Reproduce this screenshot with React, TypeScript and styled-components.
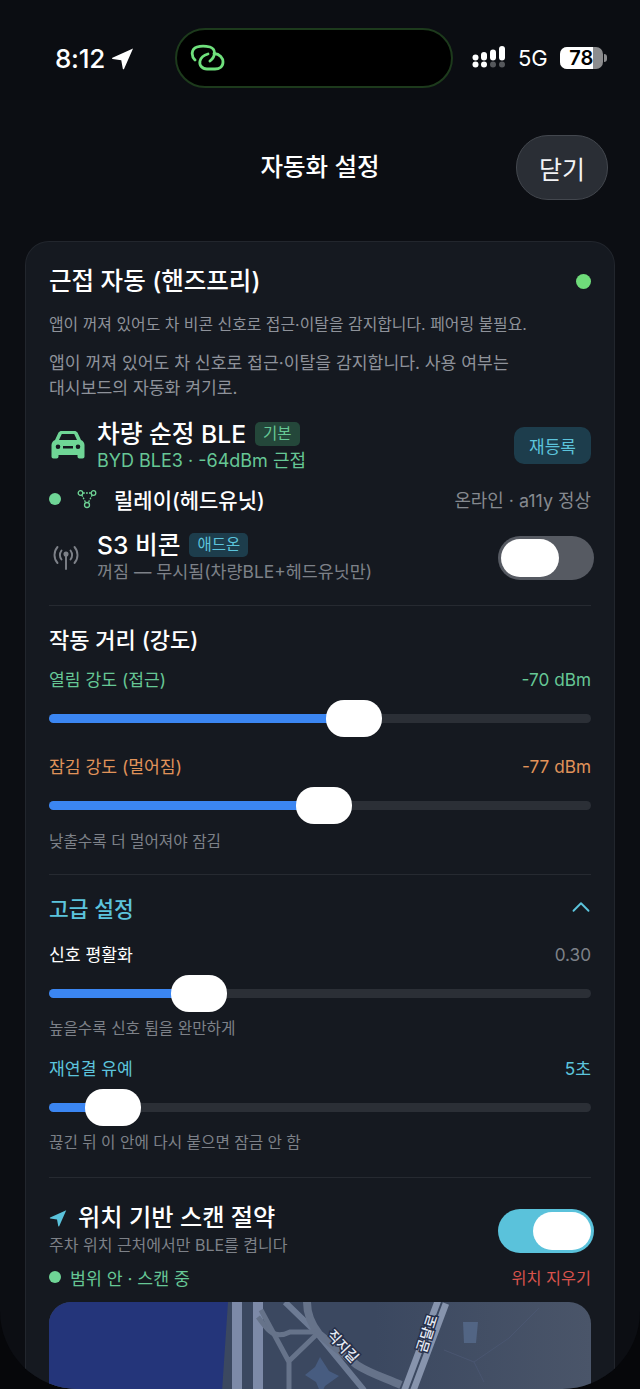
import React from "react";
import styled, { createGlobalStyle } from "styled-components";
import { ChevronUp } from "lucide-react";

const FONT = `"Inter", "Noto Sans CJK KR", sans-serif`;

const Global = createGlobalStyle`
  html, body {
    margin: 0;
    padding: 0;
    background: #050608;
    font-family: ${FONT};
    color: #fff;
  }
  * { box-sizing: border-box; }
`;

const Screen = styled.div`
  position: relative;
  width: 640px;
  height: 1389px;
  overflow: hidden;
  background: #06070a;
`;
const StatusBar = styled.div`
  height: 100px;
  padding: 28px 0 0 55px;
  display: flex;
  align-items: flex-start;
  background: #0b0d12;
`;
const Time = styled.div`
  display: flex;
  align-items: center;
  gap: 6px;
  height: 60px;
  width: 120px;
  flex: none;
  font-size: 26px;
  font-weight: 500;
  font-family: "Inter", sans-serif;
  letter-spacing: -0.3px;
`;
const Island = styled.div`
  width: 278px;
  height: 60px;
  flex: none;
  background: #000;
  border: 2px solid #1d3a1c;
  border-radius: 30px;
  display: flex;
  align-items: center;
  padding-left: 13px;
`;
const StatusRight = styled.div`
  display: flex;
  align-items: center;
  height: 60px;
  margin-left: 19px;
`;
const NetLabel = styled.span`
  margin: 0 12px;
  font-size: 22px;
  font-family: "Inter", sans-serif;
`;
const Battery = styled.div`
  position: relative;
  width: 43px;
  height: 22px;
  border-radius: 7px;
  overflow: hidden;
  background: #8c8c8e;
`;
const BatteryFill = styled.div`
  height: 100%;
  background: #fff;
`;
const BatteryText = styled.span`
  position: absolute;
  inset: 0;
  display: flex;
  align-items: center;
  justify-content: center;
  color: #000;
  font-size: 20px;
  font-weight: 600;
  font-family: "Inter", sans-serif;
`;
const BatteryCap = styled.div`
  width: 3px;
  height: 8px;
  margin-left: 1px;
  border-radius: 0 3px 3px 0;
  background: #8c8c8e;
`;

const Sheet = styled.div`
  height: 1289px;
  overflow: hidden;
  background: #0c0e13;
  border-radius: 0 0 78px 78px;
  padding: 0 25px;
`;
const SheetHeader = styled.div`
  position: relative;
  height: 141px;
  display: flex;
  align-items: flex-start;
  justify-content: center;
`;
const SheetTitle = styled.h1`
  margin: 50px 0 0;
  font-size: 24.5px;
  line-height: 34px;
  font-weight: 500;
`;
const CloseButton = styled.button`
  position: absolute;
  right: 7px;
  top: 35px;
  width: 92px;
  height: 65px;
  border-radius: 32px;
  border: 1px solid #43474e;
  background: #2a2e35;
  color: #f2f3f5;
  font-family: ${FONT};
  font-size: 25px;
`;
const Card = styled.div`
  background: #151920;
  border: 1px solid #22262d;
  border-bottom: 0;
  border-radius: 24px 24px 0 0;
  padding: 21px 23px 0;
`;
const CardHead = styled.div`
  display: flex;
  align-items: center;
  justify-content: space-between;
`;
const CardTitle = styled.h2`
  margin: 0;
  font-size: 24.5px;
  line-height: 36px;
  font-weight: 500;
`;
const Dot = styled.span<{ $size?: number; $color?: string }>`
  display: inline-block;
  flex: none;
  width: ${p => p.$size ?? 14}px;
  height: ${p => p.$size ?? 14}px;
  border-radius: 50%;
  background: ${p => p.$color ?? "#6fdc7a"};
`;
const Note = styled.p<{ $top?: number; $size: number }>`
  margin: ${p => p.$top ?? 0}px 0 0;
  font-size: ${p => p.$size}px;
  line-height: 25px;
  color: #8e929a;
`;
const VehicleRow = styled.div`
  display: flex;
  align-items: center;
  margin-top: 18px;
`;
const LeadIcon = styled.div`
  width: 48px;
  flex: none;
  display: flex;
  align-items: center;
  padding-left: 2px;
`;
const RowBody = styled.div`
  flex: 1;
  min-width: 0;
`;
const RowTitleLine = styled.div`
  display: flex;
  align-items: center;
  gap: 9px;
`;
const RowTitle = styled.span`
  font-size: 24.7px;
  line-height: 32px;
  font-weight: 500;
`;
const Tag = styled.span<{ $tone: "green" | "blue" }>`
  font-size: 15.5px;
  line-height: 24px;
  height: 24px;
  padding: 0 8px;
  border-radius: 5px;
  color: ${p => (p.$tone === "green" ? "#66c795" : "#5cc4dc")};
  background: ${p => (p.$tone === "green" ? "#24473a" : "#1d3d4c")};
`;
const RowSub = styled.div<{ $color?: string; $size?: number }>`
  font-size: ${p => p.$size ?? 17.4}px;
  line-height: 22px;
  color: ${p => p.$color ?? "#7d8188"};
`;
const ReRegister = styled.button`
  width: 77px;
  height: 37px;
  border: 0;
  border-radius: 10px;
  background: #1d3d4c;
  color: #5cc4dc;
  font-family: ${FONT};
  font-size: 17px;
`;
const RelayRow = styled.div`
  display: flex;
  align-items: center;
  margin-top: 10px;
  height: 34px;
`;
const RelayIcon = styled.span`
  margin: 0 17px 0 16px;
  display: flex;
`;
const RelayName = styled.span`
  flex: 1;
  font-size: 21px;
  font-weight: 500;
`;
const RelayState = styled.span`
  font-size: 17.9px;
  color: #85898f;
`;
const BeaconRow = styled.div`
  display: flex;
  align-items: center;
  margin-top: 13px;
  padding-bottom: 22px;
  border-bottom: 1px solid #262a31;
`;
const Toggle = styled.div<{ $on?: boolean }>`
  flex: none;
  width: 96px;
  height: 44px;
  margin: 3px -3px 0 0;
  padding: 3px;
  border-radius: 22px;
  display: flex;
  justify-content: ${p => (p.$on ? "flex-end" : "flex-start")};
  background: ${p => (p.$on ? "#5ac2db" : "#565a62")};
`;
const Knob = styled.div`
  width: 58px;
  height: 38px;
  border-radius: 19px;
  background: #fff;
`;
const SectionTitle = styled.h3`
  margin: 18px 0 0;
  font-size: 22px;
  line-height: 32px;
  font-weight: 500;
`;
const SliderHead = styled.div<{ $color?: string; $top?: number }>`
  display: flex;
  justify-content: space-between;
  align-items: center;
  margin-top: ${p => p.$top ?? 0}px;
  font-size: 17.2px;
  line-height: 26px;
  color: ${p => p.$color ?? "#fff"};
`;
const SliderValue = styled.span<{ $color?: string }>`
  color: ${p => p.$color ?? "inherit"};
`;
const SliderBox = styled.div`
  position: relative;
  height: 37px;
  margin-top: 7px;
  display: flex;
  align-items: center;
`;
const Track = styled.div`
  width: 100%;
  height: 9px;
  border-radius: 5px;
  background: #2b2f36;
  overflow: hidden;
`;
const Fill = styled.div`
  height: 100%;
  background: #3b86f2;
`;
const Thumb = styled.div`
  position: absolute;
  top: 0;
  width: 56px;
  height: 37px;
  border-radius: 18px;
  background: #fff;
`;
const Hint = styled.div<{ $top: number }>`
  margin-top: ${p => p.$top}px;
  font-size: 15.7px;
  line-height: 24px;
  color: #7d8188;
`;
const Divider = styled.div<{ $top: number }>`
  margin-top: ${p => p.$top}px;
  height: 1px;
  background: #262a31;
`;
const AdvancedHead = styled.div`
  display: flex;
  align-items: center;
  justify-content: space-between;
  margin-top: 15px;
  height: 34px;
  color: #5cc4dc;
  font-size: 21.5px;
  font-weight: 500;
`;
const Chevron = styled(ChevronUp)`
  margin-right: -5px;
`;
const ScanRow = styled.div`
  display: flex;
  align-items: center;
  margin-top: 24px;
`;
const ScanTitle = styled.div`
  display: flex;
  align-items: center;
  gap: 11px;
  font-size: 24.2px;
  line-height: 32px;
  font-weight: 500;
`;
const ScanStatus = styled.div`
  display: flex;
  align-items: center;
  justify-content: space-between;
  margin-top: 8px;
  height: 26px;
  font-size: 17.3px;
`;
const InRange = styled.span`
  display: flex;
  align-items: center;
  gap: 9px;
  color: #66c795;
`;
const ClearLink = styled.span`
  font-size: 16.3px;
  color: #d9534c;
`;
const MapBox = styled.div`
  margin-top: 12px;
  height: 120px;
  border-radius: 22px 22px 0 0;
  overflow: hidden;
  background: linear-gradient(90deg, #3b4860 60%, #4a5569);
`;
const MapSvg = styled.svg`
  display: block;
`;

const LocationArrow = ({ size, color }: { size: number; color: string }) => (
  <svg width={size} height={size} viewBox="0 0 24 24">
    <path d="M23 1.500 1.500 11.200c-.6.3-.5 1.200.2 1.300l9 1.400 1.600 8.800c.1.7 1 .8 1.300.2L23 1.500Z" fill={color} />
  </svg>
);

const SignalDots = () => (
  <svg width="34" height="24" viewBox="0 0 34 24" fill="#fff">
    <circle cx="3.500" cy="18.500" r="3" />
    <circle cx="12" cy="18.500" r="3" />
    <circle cx="21" cy="18.500" r="3" fill="#55575b" />
    <circle cx="30" cy="18.500" r="3" fill="#55575b" />
    <rect x="0.500" y="8.500" width="6" height="6" rx="3" />
    <rect x="9" y="6" width="6" height="8.500" rx="3" />
    <rect x="18" y="3.500" width="6" height="11" rx="3" />
    <rect x="27" y="0" width="6" height="14.500" rx="3" />
  </svg>
);

const LinkLogo = () => (
  <svg width="35" height="28" viewBox="0 0 35 28" fill="none" stroke="#6fe07c" strokeWidth="2.800" strokeLinecap="round">
    <path d="M5 16C1 12 1 5 7 3C10 2 16 2 20 3C26 5 26 12 20 17" />
    <path d="M24 9.500C30 10 33 14 33 18C33 23 29 25 25 25H17C12 25 9 21 10 17C11 13 14 11 18 10" />
  </svg>
);

const CarIcon = () => (
  <svg width="34" height="28" viewBox="0 0 34 28" fill="#6fd596">
    <path fillRule="evenodd" d="M7.500 1.500C8.200.6 9.300 0 10.500 0h13c1.200 0 2.300.6 3 1.500L30 9c2 .8 3.500 2.800 3.500 5v11.500c0 1.200-.8 2-2 2h-3c-1.200 0-2-.8-2-2V24h-19v1.500c0 1.200-.8 2-2 2h-3c-1.200 0-2-.8-2-2V14c0-2.200 1.500-4.200 3.500-5l3.500-7.500ZM10.800 3 8 9h18l-2.800-6H10.800ZM7 13.500a2.300 2.300 0 1 0 0 4.600 2.300 2.300 0 0 0 0-4.600Zm20 0a2.300 2.300 0 1 0 0 4.600 2.300 2.300 0 0 0 0-4.600ZM12 15v2.500h10V15H12Z" />
  </svg>
);

const RelayGraph = () => (
  <svg width="20" height="20" viewBox="0 0 20 20" fill="none" stroke="#6fd596" strokeWidth="1.300">
    <circle cx="3.500" cy="4" r="2.300" />
    <circle cx="16.500" cy="4" r="2.300" />
    <circle cx="10" cy="16" r="2.500" />
    <path d="M6 4h8M4.800 6 8.800 13.800M15.200 6l-4 7.800" strokeDasharray="1.800 1.200" />
  </svg>
);

const BeaconIcon = () => (
  <svg width="30" height="28" viewBox="0 0 30 28" fill="none" stroke="#7d8188" strokeWidth="1.900" strokeLinecap="round">
    <path d="M6.500 5C2.500 9.500 2.500 16.500 6.500 21M23.500 5c4 4.500 4 11.500 0 16" />
    <path d="M10.500 8.500c-2 2.800-2 6.200 0 9M19.500 8.500c2 2.800 2 6.200 0 9" />
    <circle cx="15" cy="12" r="1.600" fill="#7d8188" />
    <path d="M15 13v14" />
  </svg>
);

const MapArt = () => (
  <MapSvg width="542" height="120" viewBox="0 0 542 120" fill="none">
    <path d="M0 0h179l-6 90v30H0Z" fill="#24357a" />
    <path d="M188 0v120M209 0v120" stroke="#7d8aa8" strokeWidth="10" />
    <path d="M236 0 268 31l46 56 20 33" stroke="#6d7b94" strokeWidth="6" />
    <path d="M258 0c0 12 4 22 12 32l38 31c12 8 28 13 44 20" stroke="#66738a" strokeWidth="8" />
    <path d="M209 15c8 10 14 24 32 15h28" stroke="#66738a" strokeWidth="5" />
    <path d="M268 32 239 60M212 8l28 52v60" stroke="#66738a" strokeWidth="5" />
    <path d="M393 0 348 120" stroke="#8794ad" strokeWidth="15" />
    <path d="M393 0 348 120" stroke="#3b4860" strokeWidth="2" />
    <path d="M256 73l10-8 5-10 9 14 10 5-14 10-4 8-5-12Z" fill="#475c80" />
    <path d="M414 20h15l-2 21h-12Z" fill="#526584" />
    <path d="M395 48l30 12 10 20M425 60l35-24 30-30" stroke="#4a5670" strokeWidth="1" />
    <g fontFamily={FONT} fontSize="14" fontWeight="500" fill="#e6ebf4" stroke="#26304a" strokeWidth="3" paintOrder="stroke">
      <text transform="translate(293 45) rotate(47)" textAnchor="middle" dominantBaseline="middle">직지길</text>
      <text transform="translate(379 32) rotate(-72)" textAnchor="middle" dominantBaseline="middle">곰달로</text>
    </g>
  </MapSvg>
);

const Slider = ({ pct, left }: { pct: number; left: number }) => (
  <SliderBox>
    <Track>
      <Fill style={{ width: `${pct}%` }} />
    </Track>
    <Thumb style={{ left }} />
  </SliderBox>
);

export default function App() {
  return (
    <Screen>
      <Global />
      <StatusBar>
        <Time>
          8:12
          <LocationArrow size={23} color="#fff" />
        </Time>
        <Island>
          <LinkLogo />
        </Island>
        <StatusRight>
          <SignalDots />
          <NetLabel>5G</NetLabel>
          <Battery>
            <BatteryFill style={{ width: "78%" }} />
            <BatteryText>78</BatteryText>
          </Battery>
          <BatteryCap />
        </StatusRight>
      </StatusBar>
      <Sheet>
        <SheetHeader>
          <SheetTitle>자동화 설정</SheetTitle>
          <CloseButton>닫기</CloseButton>
        </SheetHeader>
        <Card>
          <CardHead>
            <CardTitle>근접 자동 (핸즈프리)</CardTitle>
            <Dot $size={15} />
          </CardHead>
          <Note $top={13} $size={15.9}>앱이 꺼져 있어도 차 비콘 신호로 접근·이탈을 감지합니다. 페어링 불필요.</Note>
          <Note $top={13} $size={17.2}>
            앱이 꺼져 있어도 차 신호로 접근·이탈을 감지합니다. 사용 여부는
            <br />
            대시보드의 자동화 켜기로.
          </Note>
          <VehicleRow>
            <LeadIcon>
              <CarIcon />
            </LeadIcon>
            <RowBody>
              <RowTitleLine>
                <RowTitle>차량 순정 BLE</RowTitle>
                <Tag $tone="green">기본</Tag>
              </RowTitleLine>
              <RowSub $color="#66c795" $size={18}>BYD BLE3 · -64dBm 근접</RowSub>
            </RowBody>
            <ReRegister>재등록</ReRegister>
          </VehicleRow>
          <RelayRow>
            <Dot $size={12} $color="#6fd596" />
            <RelayIcon>
              <RelayGraph />
            </RelayIcon>
            <RelayName>릴레이(헤드유닛)</RelayName>
            <RelayState>온라인 · a11y 정상</RelayState>
          </RelayRow>
          <BeaconRow>
            <LeadIcon>
              <BeaconIcon />
            </LeadIcon>
            <RowBody>
              <RowTitleLine>
                <RowTitle>S3 비콘</RowTitle>
                <Tag $tone="blue">애드온</Tag>
              </RowTitleLine>
              <RowSub>꺼짐 — 무시됨(차량BLE+헤드유닛만)</RowSub>
            </RowBody>
            <Toggle>
              <Knob />
            </Toggle>
          </BeaconRow>
          <SectionTitle>작동 거리 (강도)</SectionTitle>
          <SliderHead $color="#66c795" $top={11}>
            <span>열림 강도 (접근)</span>
            <span>-70 dBm</span>
          </SliderHead>
          <Slider pct={53} left={277} />
          <SliderHead $color="#e0935a" $top={17}>
            <span>잠김 강도 (멀어짐)</span>
            <span>-77 dBm</span>
          </SliderHead>
          <Slider pct={47} left={247} />
          <Hint $top={6}>낮출수록 더 멀어져야 잠김</Hint>
          <Divider $top={20} />
          <AdvancedHead>
            <span>고급 설정</span>
            <Chevron size={30} strokeWidth={1.5} />
          </AdvancedHead>
          <SliderHead $top={18}>
            <span>신호 평활화</span>
            <SliderValue $color="#7d8188">0.30</SliderValue>
          </SliderHead>
          <Slider pct={25} left={122} />
          <Hint $top={5}>높을수록 신호 튐을 완만하게</Hint>
          <SliderHead $color="#5cc4dc" $top={15}>
            <span>재연결 유예</span>
            <span>5초</span>
          </SliderHead>
          <Slider pct={10} left={36} />
          <Hint $top={5}>끊긴 뒤 이 안에 다시 붙으면 잠금 안 함</Hint>
          <Divider $top={22} />
          <ScanRow>
            <RowBody>
              <ScanTitle>
                <LocationArrow size={18} color="#5ac2db" />
                위치 기반 스캔 절약
              </ScanTitle>
              <RowSub $size={16}>주차 위치 근처에서만 BLE를 켭니다</RowSub>
            </RowBody>
            <Toggle $on>
              <Knob />
            </Toggle>
          </ScanRow>
          <ScanStatus>
            <InRange>
              <Dot $size={12} $color="#6fd596" />
              범위 안 · 스캔 중
            </InRange>
            <ClearLink>위치 지우기</ClearLink>
          </ScanStatus>
          <MapBox>
            <MapArt />
          </MapBox>
        </Card>
      </Sheet>
    </Screen>
  );
}
